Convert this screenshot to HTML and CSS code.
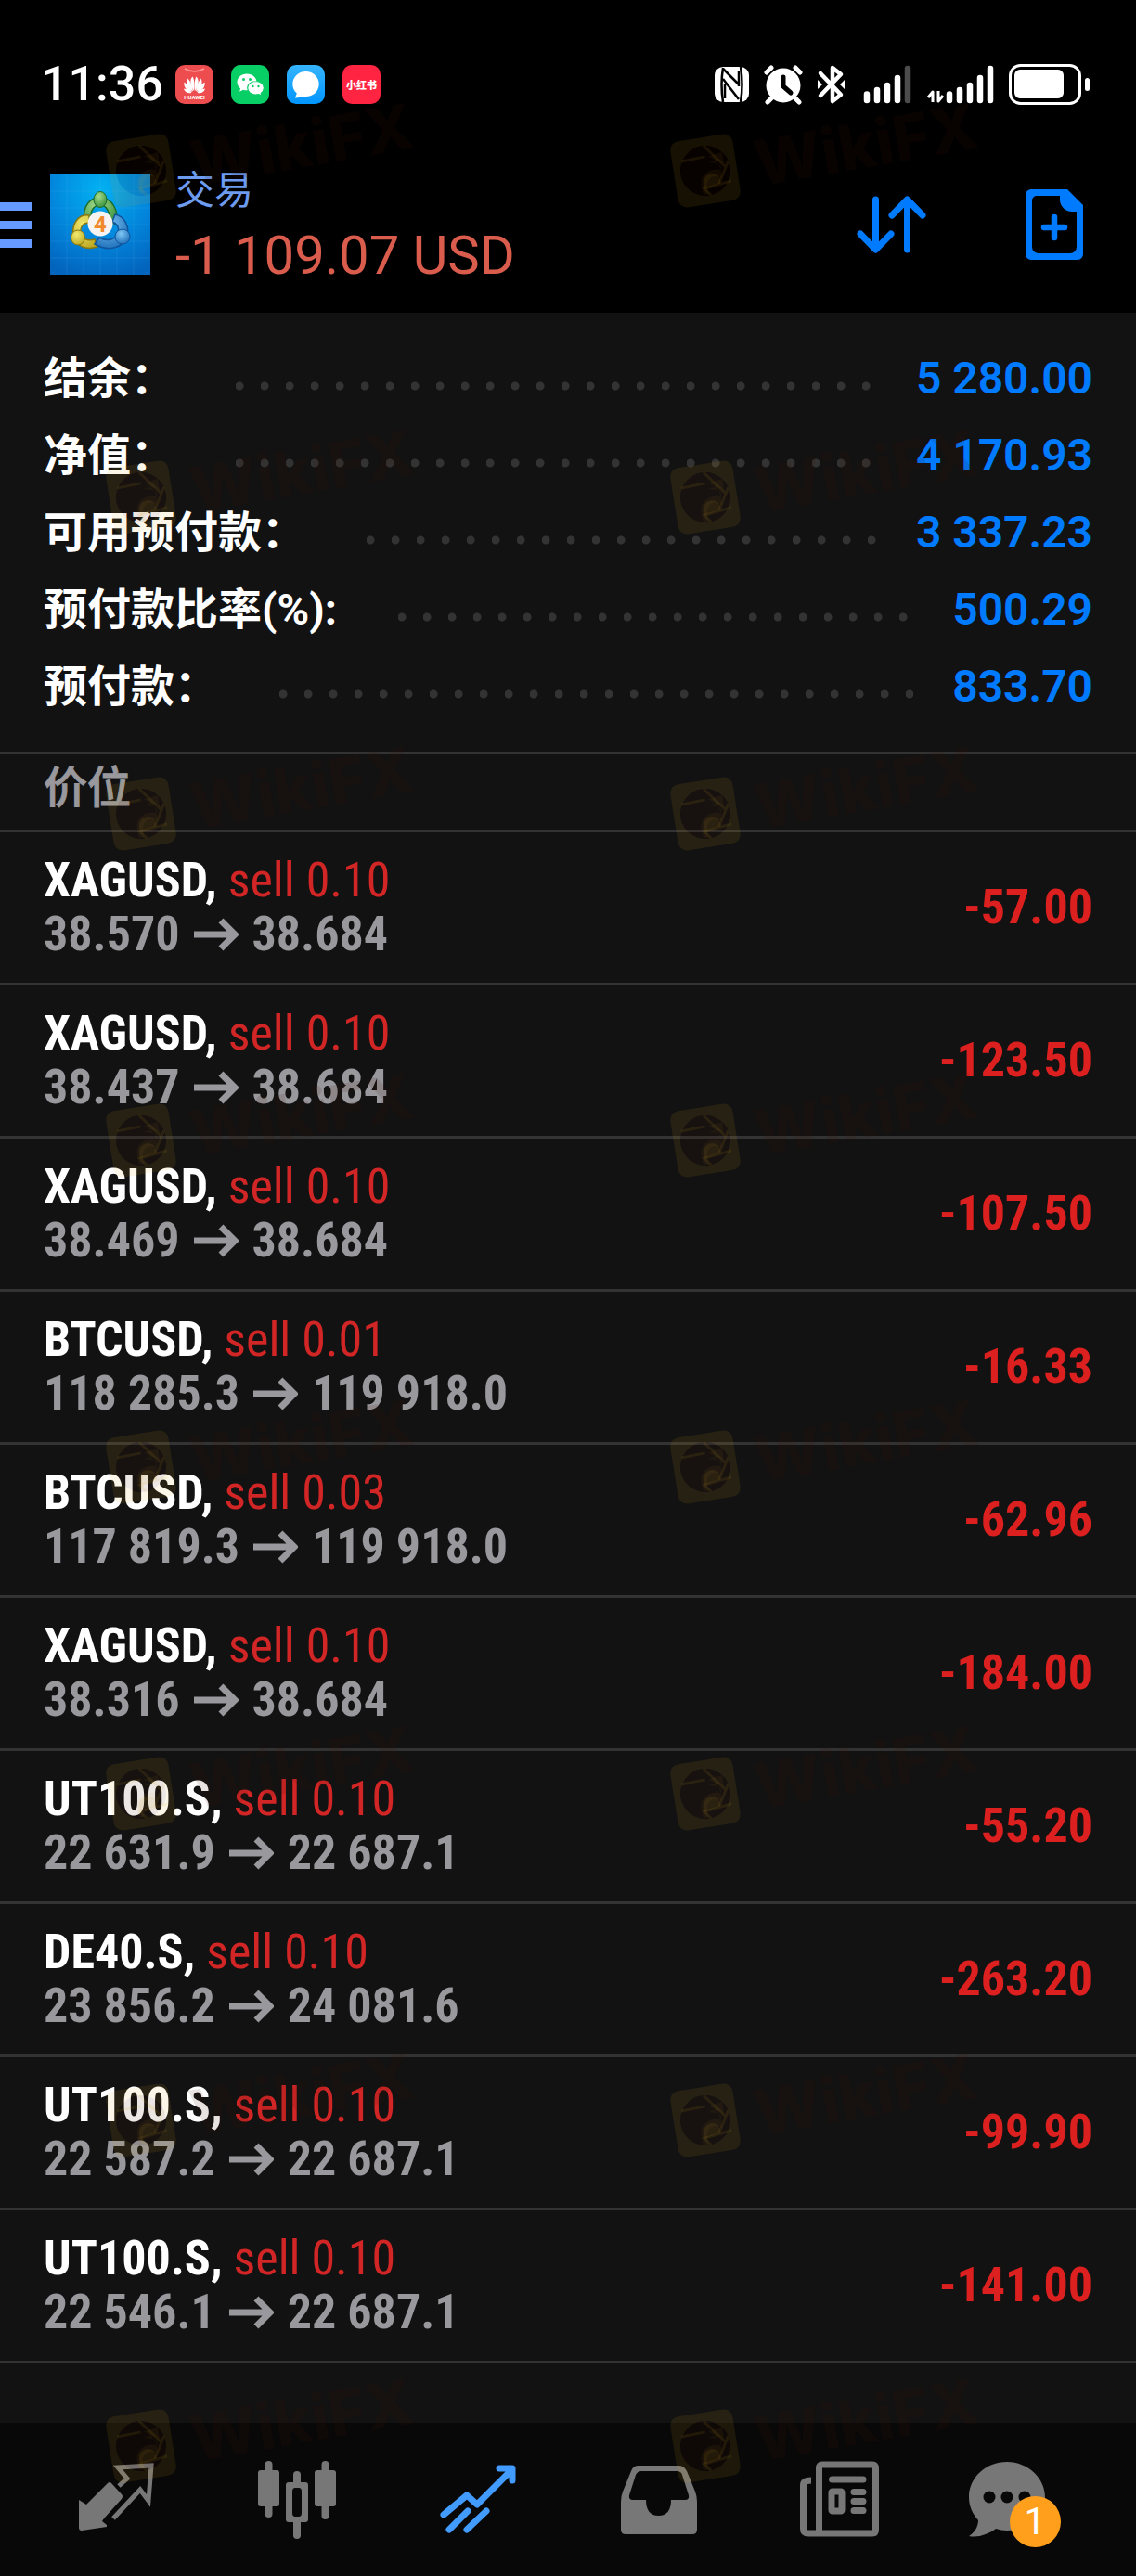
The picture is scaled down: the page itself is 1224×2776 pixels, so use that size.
FILE: index.html
```
<!DOCTYPE html>
<html lang="zh-CN">
<head>
  <meta charset="UTF-8">
  <meta name="viewport" content="width=device-width, initial-scale=1">
  <title>交易</title>
  <link rel="stylesheet" href="styles.css">
</head>
<body>
<div class="app">

  <div class="status-bar">
    <div class="status-left">
      <span class="clock">11:36</span>
      <svg class="app-badge" viewBox="0 0 41 42">
        <rect width="41" height="42" rx="10" fill="#ee4d50"/>
        <path d="M10 4q10.500 6 21 0" fill="none" stroke="#ff9a98" stroke-width="1.500"/>
        <g fill="#fff">
          <path d="M20 28C16 22 15 16 18.500 12.500C20.500 16 20.800 22 20 28z"/>
          <path d="M21 28C25 22 26 16 22.500 12.500C20.500 16 20.200 22 21 28z"/>
          <path d="M19 28.500C13 25 11 19 13.500 14.500C16.500 18 18.500 23 19 28.500z"/>
          <path d="M22 28.500C28 25 30 19 27.500 14.500C24.500 18 22.500 23 22 28.500z"/>
          <path d="M18 29C12 28 8.500 23.500 9.500 18.500C13.500 21 16.500 25 18 29z"/>
          <path d="M23 29C29 28 32.500 23.500 31.500 18.500C27.500 21 24.500 25 23 29z"/>
          <path d="M17.500 30C13 31 10 29 9 25.500C12.500 26 15.500 27.500 17.500 30z"/>
          <path d="M23.500 30C28 31 31 29 32 25.500C28.500 26 25.500 27.500 23.500 30z"/>
        </g>
        <text x="20.500" y="36.500" class="badge-huawei">HUAWEI</text>
      </svg>
      <svg class="app-badge" viewBox="0 0 41 42">
        <rect width="41" height="42" rx="10" fill="#08ce66"/>
        <path d="M17 9.500c-6 0-10.500 4-10.500 9 0 2.800 1.400 5.200 3.600 6.800l-1 3.400 3.900-2c1.300.4 2.600.6 4 .6 6 0 10.500-4 10.500-8.800s-4.500-9-10.500-9z" fill="#fff"/>
        <path d="M26.500 17.500c-5 0-8.800 3.300-8.800 7.300s3.800 7.300 8.800 7.300c1.200 0 2.300-.2 3.300-.5l3.200 1.700-.8-2.900c2-1.400 3.200-3.400 3.200-5.600 0-4-3.900-7.300-8.900-7.300z" fill="#fff" stroke="#08ce66" stroke-width="1.200"/>
        <g fill="#08ce66"><circle cx="13.500" cy="15.500" r="1.500"/><circle cx="20.500" cy="15.500" r="1.500"/><circle cx="23.500" cy="23" r="1.200"/><circle cx="29.500" cy="23" r="1.200"/></g>
      </svg>
      <svg class="app-badge" viewBox="0 0 41 42">
        <defs><linearGradient id="msg" x1="0" y1="0" x2="0" y2="1"><stop offset="0" stop-color="#36b4fd"/><stop offset="1" stop-color="#0095ff"/></linearGradient></defs>
        <rect width="41" height="42" rx="10" fill="url(#msg)"/>
        <path d="M20.500 7C12.500 7 6.300 13 6.300 20.500c0 4.400 1.700 7.600 4.500 10l-1.800 5c3 .1 6-.5 8.200-1.700 1 .2 2.200.3 3.300.3 8 0 14.200-6 14.200-13.600S28.500 7 20.500 7z" fill="#fff"/>
      </svg>
      <svg class="app-badge" viewBox="0 0 41 42">
        <rect width="41" height="42" rx="10" fill="#fe2442"/>
        <text x="20.500" y="25.500" class="badge-red">小红书</text>
      </svg>
    </div>

    <svg class="status-icons" width="412" height="44" viewBox="0 0 412 44" fill="#fff">
      <!-- nfc -->
      <rect x="8" y="3" width="37" height="38" rx="9"/>
      <path d="M17 4Q14 22 17 41M36 3Q39 22 36 41" fill="none" stroke="#000" stroke-width="2.500"/>
      <path d="M17 5L34 22M17 16L34 38M19 22V37M34 8V24" fill="none" stroke="#000" stroke-width="2.500"/>
      <!-- alarm -->
      <circle cx="82" cy="23" r="18.500"/>
      <path d="M64 9l5-5M100 9l-5-5M69 37l-4 4M95 37l4 4" stroke="#fff" stroke-width="5" stroke-linecap="round"/>
      <path d="M82 14v10l8 7" fill="none" stroke="#000" stroke-width="5" stroke-linecap="round" stroke-linejoin="round"/>
      <!-- bluetooth -->
      <path d="M122 10l22 23-9 7V4l9 7-22 23" fill="none" stroke="#fff" stroke-width="4.500" stroke-linecap="round" stroke-linejoin="round"/>
      <path d="M119 17l5 5-5 5zM148 17l-5 5 5 5z"/>
      <!-- signal -->
      <g stroke="#fff" stroke-width="6.500" stroke-linecap="round">
        <path d="M172 32.500v6.500M183 28v11M194 23v16M205 15v24"/>
        <path d="M216 5v34" stroke="#4c4c4c"/>
        <path d="M261 32.500v6.500M272 28v11M283 23v16M294 15v24M305 5v34"/>
      </g>
      <path d="M243 41V30l-5 6M249 29V40l5-6" fill="none" stroke="#fff" stroke-width="3" stroke-linejoin="round"/>
      <!-- battery -->
      <rect x="326.500" y="1.500" width="75" height="41" rx="11" fill="none" stroke="#fff" stroke-width="3"/>
      <rect x="331" y="6" width="53" height="31" rx="6"/>
      <rect x="407" y="15" width="5" height="14" rx="2.500"/>
    </svg>
  </div>

  <header class="header">
    <button class="menu-btn" aria-label="菜单"><span></span><span></span><span></span></button>
    <svg class="app-logo" viewBox="0 0 108 108">
      <defs>
        <radialGradient id="sky" cx=".5" cy=".15" r=".9"><stop offset="0" stop-color="#02b1f2"/><stop offset=".55" stop-color="#0286dc"/><stop offset="1" stop-color="#0364bd"/></radialGradient>
        <radialGradient id="green" cx=".4" cy=".3" r=".8"><stop offset="0" stop-color="#a8dc8c"/><stop offset="1" stop-color="#2c8a35"/></radialGradient>
        <radialGradient id="yellow" cx=".4" cy=".3" r=".8"><stop offset="0" stop-color="#f3ea70"/><stop offset="1" stop-color="#b9a51e"/></radialGradient>
        <radialGradient id="blue" cx=".4" cy=".3" r=".8"><stop offset="0" stop-color="#7fc6f4"/><stop offset="1" stop-color="#1568b5"/></radialGradient>
      </defs>
      <rect width="108" height="108" fill="url(#sky)"/>
      <path d="M0 18H108M0 36H108M0 54H108M0 72H108M0 90H108M18 0V108M36 0V108M54 0V108M72 0V108M90 0V108" stroke="#5cc0f5" stroke-opacity=".15"/>
      <path d="M37 50C34 34 44 24 54 25c13 0 21 15 17 29l-8-4c2-9-2-17-9-17s-12 7-9 15z" fill="url(#green)" stroke="#1c6d2a" stroke-width="1.500"/>
      <path d="M42 44c-12-2-19 10-17 22 2 11 13 16 26 12l-3-8c-7 2-14 0-15-7s3-11 9-11z" fill="url(#yellow)" stroke="#857612" stroke-width="1.500"/>
      <path d="M70 43c10 2 16 13 13 24-4 12-20 17-35 8l5-7c9 5 18 2 20-5s-1-10-6-12z" fill="url(#blue)" stroke="#10549c" stroke-width="1.500"/>
      <ellipse cx="54" cy="27" rx="7" ry="8.500" fill="url(#green)" stroke="#1c6d2a"/>
      <ellipse cx="30" cy="68" rx="7.500" ry="8" fill="url(#yellow)" stroke="#857612"/>
      <ellipse cx="78" cy="67" rx="8" ry="8" fill="url(#blue)" stroke="#10549c"/>
      <circle cx="54" cy="53" r="13.500" fill="#f6f3f1"/>
      <text x="54" y="62" class="logo-four">4</text>
    </svg>
    <div class="heading">
      <h1>交易</h1>
      <p class="total">-1 109.07 USD</p>
    </div>
    <button class="icon-btn" aria-label="排序">
      <svg width="76" height="64" viewBox="0 0 76 64" fill="none" stroke="#007bff" stroke-width="7" stroke-linecap="round" stroke-linejoin="round">
        <path d="M20.500 5V58M4 42l16.500 17L37 42M54.500 59V6M38 22L54.500 5L71 22"/>
      </svg>
    </button>
    <button class="icon-btn" aria-label="新订单">
      <svg width="62" height="76" viewBox="0 0 62 76" fill="#007bff">
        <path fill-rule="evenodd" d="M6 0H45L62 17V70a6 6 0 0 1-6 6H6a6 6 0 0 1-6-6V6a6 6 0 0 1 6-6zM12 7a5 5 0 0 0-5 5V62a7 7 0 0 0 7 7H48a7 7 0 0 0 7-7V24H50A13 13 0 0 1 37 11V7z"/>
        <path d="M31 30V52M20 41H42" stroke="#007bff" stroke-width="6.500" stroke-linecap="round"/>
      </svg>
    </button>
  </header>

  <main>
    <dl class="summary">
      <div class="summary-row"><dt>结余：</dt><dd>5 280.00</dd></div>
      <div class="summary-row"><dt>净值：</dt><dd>4 170.93</dd></div>
      <div class="summary-row"><dt>可用预付款：</dt><dd>3 337.23</dd></div>
      <div class="summary-row"><dt>预付款比率(%):</dt><dd>500.29</dd></div>
      <div class="summary-row"><dt>预付款：</dt><dd>833.70</dd></div>
    </dl>

    <h2 class="section-title">价位</h2>

    <ul class="positions">
      <li>
        <div>
          <p class="deal"><b>XAGUSD,</b> sell 0.10</p>
          <p class="prices">38.570 <svg class="arrow"><use href="#arrow"/></svg> 38.684</p>
        </div>
        <span class="profit">-57.00</span>
      </li>
      <li>
        <div>
          <p class="deal"><b>XAGUSD,</b> sell 0.10</p>
          <p class="prices">38.437 <svg class="arrow"><use href="#arrow"/></svg> 38.684</p>
        </div>
        <span class="profit">-123.50</span>
      </li>
      <li>
        <div>
          <p class="deal"><b>XAGUSD,</b> sell 0.10</p>
          <p class="prices">38.469 <svg class="arrow"><use href="#arrow"/></svg> 38.684</p>
        </div>
        <span class="profit">-107.50</span>
      </li>
      <li>
        <div>
          <p class="deal"><b>BTCUSD,</b> sell 0.01</p>
          <p class="prices">118 285.3 <svg class="arrow"><use href="#arrow"/></svg> 119 918.0</p>
        </div>
        <span class="profit">-16.33</span>
      </li>
      <li>
        <div>
          <p class="deal"><b>BTCUSD,</b> sell 0.03</p>
          <p class="prices">117 819.3 <svg class="arrow"><use href="#arrow"/></svg> 119 918.0</p>
        </div>
        <span class="profit">-62.96</span>
      </li>
      <li>
        <div>
          <p class="deal"><b>XAGUSD,</b> sell 0.10</p>
          <p class="prices">38.316 <svg class="arrow"><use href="#arrow"/></svg> 38.684</p>
        </div>
        <span class="profit">-184.00</span>
      </li>
      <li>
        <div>
          <p class="deal"><b>UT100.S,</b> sell 0.10</p>
          <p class="prices">22 631.9 <svg class="arrow"><use href="#arrow"/></svg> 22 687.1</p>
        </div>
        <span class="profit">-55.20</span>
      </li>
      <li>
        <div>
          <p class="deal"><b>DE40.S,</b> sell 0.10</p>
          <p class="prices">23 856.2 <svg class="arrow"><use href="#arrow"/></svg> 24 081.6</p>
        </div>
        <span class="profit">-263.20</span>
      </li>
      <li>
        <div>
          <p class="deal"><b>UT100.S,</b> sell 0.10</p>
          <p class="prices">22 587.2 <svg class="arrow"><use href="#arrow"/></svg> 22 687.1</p>
        </div>
        <span class="profit">-99.90</span>
      </li>
      <li>
        <div>
          <p class="deal"><b>UT100.S,</b> sell 0.10</p>
          <p class="prices">22 546.1 <svg class="arrow"><use href="#arrow"/></svg> 22 687.1</p>
        </div>
        <span class="profit">-141.00</span>
      </li>
    </ul>
  </main>

  <nav class="tabs">
    <a href="#quotes" aria-label="行情">
      <svg width="82" height="84" viewBox="0 0 82 84">
        <path d="M1 42L9 47L32 24Q34 22 36 24L47 36Q49 38 47 41L28 62L26 65L31 69V71L4 75Q1 75 1 72z" fill="#777"/>
        <path d="M44 27L53 19L43 7L79 5L76 43L67 31L38 62" fill="none" stroke="#777" stroke-width="5"/>
      </svg>
    </a>
    <a href="#charts" aria-label="图表">
      <svg width="84" height="84" viewBox="0 0 84 84" fill="#777">
        <rect x="0" y="10" width="23" height="39" rx="3"/><rect x="7.500" y="0" width="8" height="61" rx="4"/>
        <rect x="61" y="10" width="23" height="39" rx="3"/><rect x="68.500" y="0" width="8" height="63" rx="4"/>
        <rect x="38" y="11" width="8" height="16" rx="4"/><rect x="38" y="62" width="8" height="22" rx="4"/>
        <path fill-rule="evenodd" d="M33 23H51a3 3 0 0 1 3 3V63a3 3 0 0 1-3 3H33a3 3 0 0 1-3-3V26a3 3 0 0 1 3-3zM40 29a3 4 0 0 0-3 4V56a3 4 0 0 0 3 4H44a3 4 0 0 0 3-4V33a3 4 0 0 0-3-4z"/>
      </svg>
    </a>
    <a href="#trade" aria-label="交易" aria-current="page">
      <svg width="82" height="84" viewBox="0 0 82 84" fill="none" stroke="#429bff" stroke-width="7" stroke-linecap="round" stroke-linejoin="round">
        <path d="M4 58L29 37L40 47L77 10M64 8H78V21"/>
        <path d="M10 74L30 54M29 74L50 54"/>
      </svg>
    </a>
    <a href="#history" aria-label="历史">
      <svg width="82" height="84" viewBox="0 0 82 84">
        <path fill="#777" fill-rule="evenodd" d="M18 5H63Q68 5 71 11L80 33Q82 38 82 44V74Q82 79 77 79H5Q0 79 0 74V44Q0 38 2 33L11 11Q13 5 18 5zM22 11Q18 11 16 15L9 37Q8 42 13 42H27Q27 59 40.500 59T54 42H69Q74 42 73 37L66 15Q65 11 60 11z"/>
      </svg>
    </a>
    <a href="#news" aria-label="新闻">
      <svg width="86" height="84" viewBox="0 0 86 84" fill="none" stroke="#777" stroke-width="7">
        <path d="M20.500 78V8Q20.500 4 24 4H78Q81.500 4 81.500 8V74Q81.500 78 78 78H9Q3.500 78 3.500 73V26Q3.500 21 12 21"/>
        <g stroke-linecap="round"><path d="M34.500 20H68M58 33.500H68M58 43.500H68M58 53.500H68"/></g>
        <rect x="34" y="33" width="11" height="21" rx="1"/>
      </svg>
    </a>
    <a href="#messages" aria-label="消息">
      <span class="messages">
        <svg width="83" height="84" viewBox="0 0 83 84">
          <path d="M41 1C18 1 0 18 0 39c0 10 4 18 10 25 0 7-4 13-10 17 10 2 21-2 29-8 4 1 8 2 12 2 23 0 41-16 41-36S64 1 41 1z" fill="#777"/>
          <circle cx="22" cy="39" r="6.500" fill="#080808"/><circle cx="41" cy="39" r="6.500" fill="#080808"/><circle cx="60" cy="39" r="6.500" fill="#080808"/>
        </svg>
        <span class="count">1</span>
      </span>
    </a>
  </nav>

  <!-- watermark layer, over everything -->
  <svg class="watermarks" aria-hidden="true">
    <defs>
      <symbol id="arrow" viewBox="0 0 48 38">
        <path d="M0 19H44M29 4L44 19L29 34" fill="none" stroke="#98989d" stroke-width="7"/>
      </symbol>
      <g id="mark">
        <g transform="rotate(-9 40 41)">
          <path fill="#dcaa1e" fill-opacity=".1" fill-rule="evenodd" d="M17 5H63Q74 5 74 16V66Q74 77 63 77H17Q6 77 6 66V16Q6 5 17 5zM40 14A27 27 0 1 0 40 68A27 27 0 1 0 40 14z"/>
          <circle cx="40" cy="41" r="27" fill="#441000" fill-opacity=".1"/>
          <path d="M42 14L62 40M66 34L52 58M66 56L36 60L42 68M16 27L42 26" fill="none" stroke="#dcaa1e" stroke-opacity=".1" stroke-width="3"/>
          <path d="M34 66Q30 46 44 42Q50 40 57 43Q59 39 55 36Q50 33 44 33Q54 29 61 37V24L45 26Q60 34 56 52Q46 44 40 54Q38 60 40 67z" fill="#dcaa1e" fill-opacity=".06"/>
          <path d="M36 60Q34 46 46 45Q56 46 54 57z" fill="#dcaa1e" fill-opacity=".1"/>
        </g>
        <text x="98" y="58" transform="rotate(-10 98 58)" class="mark-text">WikiFX</text>
      </g>
    </defs>
    <use href="#mark" x="112" y="143"/><use href="#mark" x="720" y="143"/>
    <use href="#mark" x="112" y="495"/><use href="#mark" x="720" y="495"/>
    <use href="#mark" x="112" y="836"/><use href="#mark" x="720" y="836"/>
    <use href="#mark" x="112" y="1188"/><use href="#mark" x="720" y="1188"/>
    <use href="#mark" x="112" y="1540"/><use href="#mark" x="720" y="1540"/>
    <use href="#mark" x="112" y="1892"/><use href="#mark" x="720" y="1892"/>
    <use href="#mark" x="112" y="2244"/><use href="#mark" x="720" y="2244"/>
    <use href="#mark" x="112" y="2595"/><use href="#mark" x="720" y="2595"/>
  </svg>
</div>
</body>
</html>
```
FILE: styles.css
```
* {
  box-sizing: border-box;
}
body {
  margin: 0;
  background: #121212;
  color: #fff;
  font-family: Roboto, "Noto Sans CJK SC", sans-serif;
}
h1, h2, p, ul, dl, dd {
  margin: 0;
  padding: 0;
}
svg {
  display: block;
}
button {
  padding: 0;
  border: 0;
  background: none;
}
.app {
  position: relative;
  display: flex;
  flex-direction: column;
  min-height: 100vh;
  overflow: hidden;
}

/* status bar */
.status-bar {
  display: flex;
  align-items: center;
  justify-content: space-between;
  height: 182px;
  padding: 0 50px 0 44px;
  background: #000;
}
.status-left {
  display: flex;
  align-items: center;
  gap: 19px;
}
.clock {
  font-size: 52px;
  font-weight: 500;
  line-height: 60px;
  margin-right: -6px;
}
.app-badge {
  width: 41px;
  height: 42px;
}
.badge-huawei {
  font-size: 6px;
  font-weight: bold;
  fill: #fff;
  text-anchor: middle;
}
.badge-red {
  font-size: 11px;
  font-weight: 900;
  fill: #fff;
  text-anchor: middle;
}

/* header */
.header {
  display: flex;
  align-items: center;
  padding: 6px 57px 41px 0;
  background: #000;
}
.menu-btn {
  display: flex;
  flex-direction: column;
  gap: 11px;
  width: 34px;
  margin-right: 20px;
}
.menu-btn span {
  height: 9px;
  background: #669aff;
}
.app-logo {
  width: 108px;
  height: 108px;
  margin-right: 27px;
}
.logo-four {
  font-size: 24px;
  font-weight: bold;
  fill: #f08a2c;
  text-anchor: middle;
}
.heading {
  flex: 1;
  height: 108px;
}
h1 {
  color: #6c9bef;
  font-size: 42px;
  font-weight: 400;
  line-height: 36px;
}
.total {
  color: #d95c4d;
  font-size: 58px;
  line-height: 62px;
  margin-top: 20px;
}
.icon-btn + .icon-btn {
  margin-left: 106px;
}

/* account summary */
main {
  flex: 1;
}
.summary {
  padding: 29px 47px;
  border-bottom: 3px solid #333;
}
.summary-row {
  display: flex;
  line-height: 83px;
}
.summary-row dt {
  font-size: 47px;
  font-weight: bold;
}
.summary-row::before {
  content: "";
  order: 1;
  flex: 1;
  margin: 0 42px 0 66px;
  background: radial-gradient(circle at 4px 5px, #333 4px, transparent 5px) 0 45px / 27px 10px repeat-x;
}
.summary-row dd {
  order: 2;
  color: #007bff;
  font-size: 48px;
  font-weight: 600;
}
.section-title {
  padding: 0 47px 10px;
  border-bottom: 3px solid #333;
  color: #98989d;
  font-size: 47px;
  font-weight: 500;
  line-height: 71px;
  -webkit-text-stroke: 1px #98989d;
}

/* open positions */
.positions {
  list-style: none;
  font-family: "Roboto Condensed", "Liberation Sans Narrow", Roboto, sans-serif;
  font-size: 52px;
  line-height: 58px;
}
.positions li {
  display: flex;
  align-items: center;
  justify-content: space-between;
  padding: 23px 47px;
  border-bottom: 3px solid #333;
}
.deal {
  color: #d22626;
}
.deal b {
  color: #fff;
}
.prices {
  display: flex;
  align-items: center;
  gap: 15px;
  color: #98989d;
  font-weight: bold;
}
.arrow {
  width: 48px;
  height: 38px;
}
.profit {
  color: #dc2020;
  font-weight: bold;
}

/* bottom tabs */
.tabs {
  display: flex;
  height: 165px;
  padding: 0 27px;
  background: #080808;
}
.tabs a {
  flex: 1;
  display: flex;
  align-items: center;
  justify-content: center;
}
.messages {
  position: relative;
  width: 112px;
}
.count {
  position: absolute;
  left: 44px;
  top: 38px;
  width: 55px;
  height: 55px;
  border-radius: 50%;
  background: #ff9f1c;
  color: #fff;
  font-size: 40px;
  line-height: 55px;
  text-align: center;
}

.watermarks {
  position: absolute;
  left: 0;
  top: 0;
  width: 100%;
  height: 100%;
  pointer-events: none;
}
.mark-text {
  font-family: Inter, sans-serif;
  font-size: 68px;
  font-weight: 800;
  fill: #441000;
  fill-opacity: .12;
}
```
